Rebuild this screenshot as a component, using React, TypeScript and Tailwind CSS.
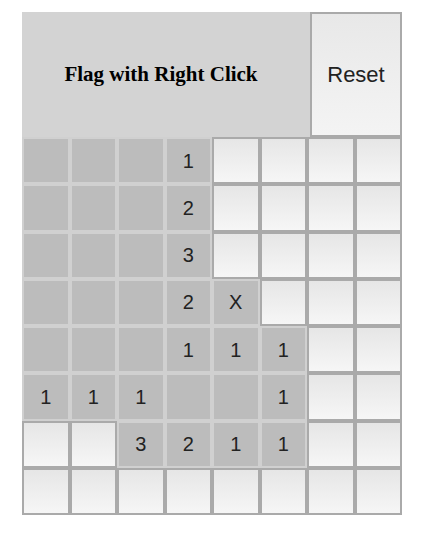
const board: string[][] = [
  ['', '', '', '1', 'u', 'u', 'u', 'u'],
  ['', '', '', '2', 'u', 'u', 'u', 'u'],
  ['', '', '', '3', 'u', 'u', 'u', 'u'],
  ['', '', '', '2', 'X', 'u', 'u', 'u'],
  ['', '', '', '1', '1', '1', 'u', 'u'],
  ['1', '1', '1', '', '', '1', 'u', 'u'],
  ['u', 'u', '3', '2', '1', '1', 'u', 'u'],
  ['u', 'u', 'u', 'u', 'u', 'u', 'u', 'u'],
]

function Cell({ value }: { value: string }) {
  if (value === 'u') {
    return (
      <div className="h-[47.25px] border-2 border-[#aaaaaa] bg-gradient-to-b from-[#e6e6e6] to-[#f6f6f6]" />
    )
  }
  return (
    <div className="flex h-[47.25px] items-center justify-center border-2 border-[#d0d0d0] bg-[#bcbcbc] text-[20px] text-[#222]">
      {value}
    </div>
  )
}

export default function App() {
  return (
    <div className="min-h-[560px] bg-white pl-[22px] pt-[12px] font-['Helvetica','Liberation_Sans',sans-serif]">
      <div className="w-[380px]">
        {/* header */}
        <div className="flex h-[125px]">
          <div className="flex flex-1 items-center justify-center bg-[#d3d3d3] pr-[10px] font-['Liberation_Serif',serif] text-[21px] font-bold text-black">
            Flag with Right Click
          </div>
          <button className="w-[92px] border-2 border-[#aaaaaa] bg-gradient-to-b from-[#e8e8e8] to-[#f4f4f4] text-[22px] text-[#222]">
            Reset
          </button>
        </div>

        <div className="grid grid-cols-8">
          {board.map((row, r) =>
            row.map((v, c) => <Cell key={`${r}-${c}`} value={v} />)
          )}
        </div>
      </div>
    </div>
  )
}
